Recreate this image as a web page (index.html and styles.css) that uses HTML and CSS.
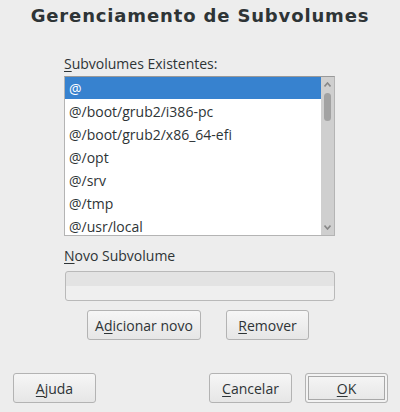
FILE: index.html
```html
<!DOCTYPE html>
<html>
<head>
<meta charset="utf-8">
<link rel="stylesheet" href="styles.css">
</head>
<body>
<div class="dialog">
  <h1 class="title">Gerenciamento de Subvolumes</h1>
  <div class="content">
    <div class="label"><span class="mn">S</span>ubvolumes Existentes:</div>
    <div class="listbox">
      <ul class="items">
        <li class="item selected">@</li>
        <li class="item">@/boot/grub2/i386-pc</li>
        <li class="item">@/boot/grub2/x86_64-efi</li>
        <li class="item">@/opt</li>
        <li class="item">@/srv</li>
        <li class="item">@/tmp</li>
        <li class="item">@/usr/local</li>
      </ul>
      <div class="scrollbar">
        <svg class="arrow" width="7" height="5" viewBox="0 0 7 5"><path d="M0.5 4.5 L3.5 1 L6.5 4.5" fill="none" stroke="#888" stroke-width="1.6"/></svg>
        <div class="thumb"></div>
        <div class="spacer"></div>
        <svg class="arrow" width="7" height="5" viewBox="0 0 7 5"><path d="M0.5 0.5 L3.5 4 L6.5 0.5" fill="none" stroke="#888" stroke-width="1.6"/></svg>
      </div>
    </div>
    <div class="label label2"><span class="mn">N</span>ovo Subvolume</div>
    <div class="input"></div>
    <div class="row-buttons">
      <button class="btn btn-add">A<span class="mn">d</span>icionar novo</button>
      <button class="btn btn-rem"><span class="mn">R</span>emover</button>
    </div>
  </div>
  <div class="footer">
    <button class="btn btn-foot"><span class="mn">A</span>juda</button>
    <div class="footer-right">
      <button class="btn btn-foot"><span class="mn">C</span>ancelar</button>
      <button class="btn btn-foot btn-default"><span class="mn">O</span>K</button>
    </div>
  </div>
</div>
</body>
</html>
```
FILE: styles.css
```css
html, body {
  margin: 0;
  padding: 0;
  background: #ededed;
}
body {
  width: 400px;
  height: 412px;
  overflow: hidden;
  font-family: "Open Sans", "DejaVu Sans", sans-serif;
  color: #2e3436;
}
.dialog {
  display: flex;
  flex-direction: column;
  height: 412px;
}
.title {
  margin: 4px 0 0 0;
  font-family: "DejaVu Sans", sans-serif;
  font-weight: bold;
  font-size: 18px;
  line-height: 24px;
  letter-spacing: 0.85px;
  text-align: center;
  color: #2e3436;
}
.content {
  padding: 0 65px 0 64px;
  display: flex;
  flex-direction: column;
}
.label {
  margin-top: 27px;
  font-size: 14px;
  line-height: 18px;
  color: #2e3436;
}
.mn {
  text-decoration: underline;
  text-underline-offset: 2px;
}
.listbox {
  margin-top: 3px;
  height: 158px;
  border: 1px solid #b4b4b4;
  border-top-color: #999;
  background: #fff;
  display: flex;
  overflow: hidden;
}
.items {
  list-style: none;
  margin: 0;
  padding: 0;
  flex: 1;
}
.item {
  height: 23px;
  line-height: 25px;
  padding-left: 4px;
  font-size: 14px;
  color: #2e3436;
}
.item.selected {
  background: #3782cf;
  color: #fff;
  height: 22px;
  line-height: 24px;
}
.scrollbar {
  width: 13px;
  background: #cfcfcf;
  display: flex;
  flex-direction: column;
  align-items: center;
  padding: 5px 0 5px 0;
  box-sizing: border-box;
}
.arrow {
  display: block;
  flex: none;
}
.thumb {
  margin-top: 6px;
  width: 7px;
  height: 28px;
  border-radius: 4px;
  background: #a2a2a2;
}
.spacer {
  flex: 1;
}
.label2 {
  margin-top: 11px;
}
.input {
  margin-top: 6px;
  margin-left: 1px;
  height: 30px;
  box-sizing: border-box;
  border: 1px solid #b9b9b9;
  border-radius: 3px;
  background: linear-gradient(#e3e3e3 0, #e3e3e3 50%, #efefef 50%, #efefef 100%);
}
.row-buttons {
  display: flex;
  justify-content: center;
  gap: 25px;
  margin-top: 9px;
  padding-right: 3px;
}
.btn {
  font-family: "Open Sans", "DejaVu Sans", sans-serif;
  font-size: 14px;
  color: #2e3436;
  height: 30px;
  padding: 0;
  border: 1px solid #b3b3b3;
  border-radius: 3px;
  background: linear-gradient(#f6f6f6, #e6e6e6);
  box-sizing: border-box;
}
.btn-add { width: 114px; }
.btn-rem { width: 83px; }
.footer {
  margin-top: auto;
  margin-bottom: 9px;
  padding: 0 12px 0 13px;
  display: flex;
  justify-content: space-between;
}
.footer-right {
  display: flex;
  gap: 13px;
}
.btn-foot { width: 83px; }
.btn-default {
  box-shadow: inset 0 0 0 2px #f3f3f3, inset 0 0 0 3px #a8a8a8;
}
```
